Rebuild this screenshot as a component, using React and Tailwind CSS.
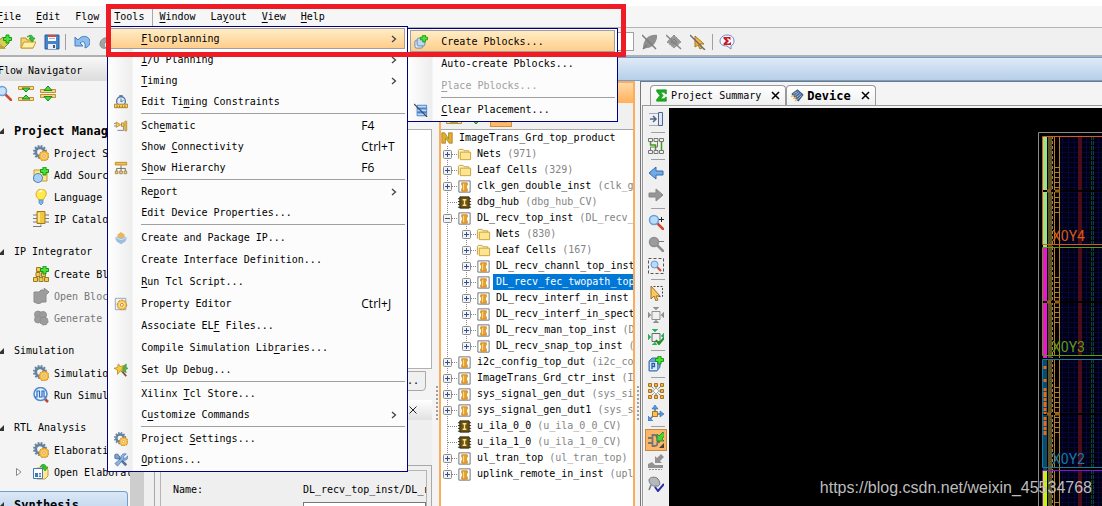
import { useState } from 'react';

const GearShape = ({ cx, cy, r, color, hole }) => (
  <g fill="none" stroke={color}>
    <circle cx={cx} cy={cy} r={r} strokeWidth="2" strokeDasharray={`${r * 0.3} ${r * 0.2236}`} />
    <circle cx={cx} cy={cy} r={r * 0.7} strokeWidth={r * 0.45} />
    <circle cx={cx} cy={cy} r={r * 0.35} fill={hole} stroke="none" />
  </g>
);

const Plus = ({ x, y }) => (
  <path
    d={`M${x + 2} ${y}h3v2.5h2.5v3h-2.5v2.5h-3v-2.5h-2.5v-3h2.5z`}
    fill="#4fe03c"
    stroke="#129a12"
    strokeWidth="1"
  />
);

const Lens = ({ color, handle }) => (
  <g>
    <path d="M9 9l6 6" stroke={handle} strokeWidth="2.5" strokeLinecap="round" />
    <circle cx="6" cy="6" r="4.5" fill={color} stroke={handle === '#8f8f8f' ? '#8f8f8f' : '#6c9dd6'} strokeWidth="1.5" />
  </g>
);

const icons = {
  newProject: (
    <g>
      <path d="M1 8l6-5 6 6-5 5z" fill="#dccb54" stroke="#8c8433" />
      <path d="M0 12h7l3 3H2z" fill="#b7a836" />
      <Plus x={8} y={1} />
    </g>
  ),
  open: (
    <g>
      <path d="M1 14V4h5l1 2h6v8z" fill="#f5d26a" stroke="#b98f2c" />
      <path d="M1 14l3-6h12l-3 6z" fill="#fff0a8" stroke="#c79c31" />
      <path d="M7 3c3-3 6-2 6 1h2l-3 4-3-4h2c0-1-2-2-4-1z" fill="#32c832" stroke="#148714" strokeWidth=".6" />
    </g>
  ),
  save: (
    <g>
      <path d="M1 1h14v14H1z" fill="#4384cc" stroke="#285b9c" />
      <path d="M4 1h8v6H4z" fill="#fff" />
      <path d="M4 1h8v2H4z" fill="#dc4a36" />
      <path d="M5 4.500h6" stroke="#9bb7d5" />
      <path d="M4 10h8v5H4z" fill="#e8eef6" />
      <path d="M9 11h2v3H9z" fill="#3d5b80" />
    </g>
  ),
  undo: (
    <path d="M1 3v9h8L6 9c3-3 6-1 5 5 3-1 5-3 5-6 0-6-8-8-12-2z" fill="#8fbdeb" stroke="#3e7fc4" />
  ),
  redo: <path d="M12 5C8 2 2 5 2 10c0 4 4 5 6 4-3-2-2-6 1-6l2 3 3-8z" fill="#a3a3a3" stroke="#888" />,
  leafOff: (
    <g>
      <path d="M1 15C1 5 7 0 15 1c1 5-4 13-10 13z" fill="#8f8f8f" />
      <path d="M0 1l14 14M1 15l4-4" stroke="#7c7c7c" strokeWidth="1.500" />
    </g>
  ),
  chipOff: (
    <g>
      <path d="M8 1l7 7-7 6-7-6z" fill="#999" stroke="#8c8c8c" strokeDasharray="2 1" />
      <path d="M8 5l3 3-3 2-3-2z" fill="none" stroke="#7c7c7c" />
      <path d="M0 1l15 14" stroke="#868686" strokeWidth="1.500" />
    </g>
  ),
  cursorOff: (
    <g>
      <path d="M5 2v11l3-2 2 4 2-1-2-4h4z" fill="#f2b63c" stroke="#a87520" />
      <path d="M0 1l15 15" stroke="#6b6b6b" strokeWidth="1.500" />
    </g>
  ),
  sigmaBubble: (
    <g>
      <path d="M8 1c5 0 7 3 7 6 0 2-1 4-3 5l0 3-4-3c-5 0-7-2-7-5s3-6 7-6z" fill="#f3f6ff" stroke="#6d8cc7" />
      <path d="M4.500 3h7v3l-2-1.500H7.500L10 7 7.500 9.500H10l2-1.500v3h-7.500V9.500L7 7 4.500 4.500z" fill="#d2141e" />
    </g>
  ),
  search: <Lens color="#c7e2fb" handle="#cc4a34" />,
  collapse: (
    <g>
      <path d="M.5 1.500h15v3H.5zM.5 12.500h15v3H.5z" fill="#f6d98a" stroke="#bf8e35" />
      <path d="M4 3h8L8 7z" fill="#52d246" stroke="#1b8c1b" />
      <path d="M4 14h8L8 10z" fill="#52d246" stroke="#1b8c1b" />
    </g>
  ),
  expand: (
    <g>
      <path d="M.5 4.500h15v3H.5zM.5 9.500h15v3H.5z" fill="#f6d98a" stroke="#bf8e35" />
      <path d="M4 5.500h8L8 1z" fill="#52d246" stroke="#1b8c1b" />
      <path d="M4 11.500h8L8 16z" fill="#52d246" stroke="#1b8c1b" />
    </g>
  ),
  gears: (
    <g>
      <GearShape cx={7} cy={7} r={6} color="#6583a0" hole="#f4f4f4" />
      <circle cx="11" cy="11" r="5" fill="#f4b63c" stroke="#b9781c" strokeWidth=".8" strokeDasharray="2 1" />
      <circle cx="11" cy="11" r="3" fill="#ffd36b" />
      <circle cx="11" cy="11" r="1.300" fill="#fff" stroke="#b9781c" strokeWidth=".6" />
    </g>
  ),
  addSource: (
    <g>
      <path d="M1 3h13v11H1z" fill="#ffe48c" stroke="#c79c31" />
      <circle cx="5" cy="11" r="4.500" fill="#a8cff5" stroke="#4d86c6" />
      <Plus x={8} y={0} />
    </g>
  ),
  bulb: (
    <g>
      <path d="M8 0c4 0 6 3 5 6-1 2-2 3-3 5H6C5 9 3 8 3 5.500 3 3 5 0 8 0z" fill="#ffea4e" stroke="#d8aa28" />
      <path d="M6 3c1-1 2-1 3-1" stroke="#fff" strokeWidth="1.500" />
      <path d="M6 11h4v3l-2 2-2-2z" fill="#7bb7ea" stroke="#4783bd" strokeWidth=".7" />
    </g>
  ),
  chip: (
    <g>
      <path d="M0 4h16M0 7.500h16M0 11h16" stroke="#777" />
      <path d="M4 .5h8v12H4z" fill="#f2c63f" stroke="#a57717" />
      <path d="M6 2v9" stroke="#fff2a8" strokeWidth="1.500" />
      <path d="M0 15.500h8v-2" fill="none" stroke="#777" />
    </g>
  ),
  blocks: (
    <g fill="#f0cd52" stroke="#9d7a1c">
      <path d="M.5 11.500h4v4h-4zM6 11.500h4v4H6zM11.500 11.500h4v4h-4zM3 6.500h4v4H3zM8.500 6.500h4v4h-4zM3.500 1.500h4v4h-4z" />
      <Plus x={8} y={0} />
    </g>
  ),
  blockOff: <path d="M1 4h5l2-2h4l-1-2 5 4-3 3v7H9l-3 2-5-2z" fill="#9c9c9c" stroke="#8b8b8b" />,
  generateOff: (
    <g fill="#9c9c9c" stroke="#929292">
      <circle cx="5" cy="4.500" r="3.500" />
      <circle cx="10" cy="5" r="3.500" />
      <circle cx="5" cy="9.500" r="3.500" />
      <circle cx="11" cy="11" r="4" stroke="#858585" strokeDasharray="2 1" />
    </g>
  ),
  runSim: (
    <g>
      <path d="M11 11l4 4" stroke="#c0472f" strokeWidth="2.500" />
      <circle cx="7.500" cy="7" r="6.500" fill="#e6f3ff" stroke="#4f8ace" strokeWidth="1.500" />
      <path d="M2 10h2V4h2.500v6H9V4h2v6h2" fill="none" stroke="#2b69bd" strokeWidth="1.200" />
    </g>
  ),
  openDesign: (
    <g>
      <path d="M4 14V4h10l1 2v6l-3 3H4z" fill="#ffe994" stroke="#c79c31" />
      <path d="M.5 4.500h9v10h-9z" fill="#fff" stroke="#4778b3" />
      <path d="M2 9h3v4H2zM6 9h2v1.500H6zM6 11.500h2V13H6z" fill="#3c77c3" />
      <path d="M7 3c2-4 6-3 6 0h2l-3 4-3-4h2c0-1-2-1-4 0z" fill="#32c832" stroke="#148714" strokeWidth=".6" />
    </g>
  ),
  timing: (
    <g>
      <path d="M6 1h4" stroke="#3b6594" strokeWidth="1.500" />
      <circle cx="8" cy="7" r="5" fill="#e2efff" stroke="#4c76a6" strokeWidth="1.500" />
      <path d="M8 4v4l3-2" stroke="#3b6594" fill="none" />
      <path d="M.5 10.500h15v4H.5z" fill="#ffd65a" stroke="#a77c1e" />
      <path d="M3.500 12v2M6.500 12v2M9.500 12v2M12.500 12v2" stroke="#6e5215" />
    </g>
  ),
  schematic: (
    <g fill="#f5cc5c" stroke="#b78a2c">
      <path d="M2.500 3.500l5 3-5 3z" />
      <path d="M8.500 4.500h3v4h-3z" />
      <path d="M12.500 2.500h2v11h-2z" />
      <path d="M0 5h2M0 8h2M8 7h1M4 13h7v-4" fill="none" stroke="#777" />
    </g>
  ),
  hierarchy: (
    <g>
      <path d="M1.500 1.500h13v3h-13z" fill="#f3c23c" stroke="#b98727" />
      <path d="M8 5v7M3 12V8.500h10V12" fill="none" stroke="#666" />
      <path d="M1.500 11.500h3v3h-3zM6.500 11.500h3v3h-3zM11.500 11.500h3v3h-3z" fill="#e8d3a0" stroke="#a4803a" />
    </g>
  ),
  packageIp: (
    <g>
      <path d="M1 7l7-2 7 2-2 5-5 3-5-3z" fill="#9dbce0" />
      <path d="M1 7l7 3 7-3" stroke="#d9e7f7" fill="none" />
      <path d="M4 4l4-3 4 3v3L8 8 4 7z" fill="#e8b95b" />
    </g>
  ),
  property: (
    <g>
      <path d="M1.500 1.500h12v13h-12z" fill="#f2f6fc" stroke="#8b9ebc" />
      <circle cx="9" cy="9" r="5.500" fill="#f6c24a" stroke="#b98224" strokeDasharray="3 1" />
      <circle cx="9" cy="9" r="3.500" fill="#ffdc85" />
      <circle cx="9" cy="9" r="1.700" fill="#fff" stroke="#b98224" />
    </g>
  ),
  debug: (
    <g>
      <path d="M7 7l7 8" stroke="#7a5230" strokeWidth="2" />
      <path d="M10 4l4-3v4l2 1-3 2 1 3-4-2z" fill="#52b44a" stroke="#2f7a2c" strokeWidth=".6" />
      <path d="M5 1l2 3 4-1-2 4 2 3-4-1-3 4V8L0 6l4-1z" fill="#f6cb3a" stroke="#a68119" strokeWidth=".8" />
    </g>
  ),
  options: (
    <g>
      <path d="M3 3l11 11" stroke="#54749c" strokeWidth="3" />
      <path d="M1 2l3-1 3 4-3 2-3-1z" fill="#7fa3cc" stroke="#4a6f9f" />
      <path d="M14 1l-3 3v2h2l3-3c1 4-3 6-6 5l-6 7-3-3 7-6c-1-3 2-6 6-5z" fill="#8db3e0" stroke="#3968a5" strokeWidth=".7" />
    </g>
  ),
  pblocks: (
    <g>
      <rect x="1" y="6" width="9" height="9" rx="2" fill="#d9e8f7" stroke="#5c83a8" />
      <rect x="3.500" y="3.500" width="9" height="9" rx="2" fill="#bfd8ee" stroke="#5c83a8" />
      <Plus x={8} y={0} />
    </g>
  ),
  clearPlacement: (
    <g>
      <rect x="3" y="2" width="12" height="13" rx="1" fill="#4b86cf" />
      <path d="M4 4h10M4 8.500h10M4 13h10" stroke="#c2dcf7" strokeWidth="2" />
      <path d="M0 1l15 15" stroke="#3f4954" strokeWidth="1.300" />
    </g>
  ),
  sigma: <path d="M2 1h12v5h-1l-2-2H7l3 4-3 4h4l2-2h1v5H2v-2l4-5-4-5z" fill="#17b01c" stroke="#0b8512" strokeWidth=".7" />,
  device: (
    <g>
      <path d="M1 6l7-5 7 6-6 8z" fill="#48699b" stroke="#2c4571" />
      <path d="M3 6l5-3M5 8l5-4M7 10l5-4M9 12l4-4" stroke="#b2c9e8" />
      <path d="M0 9l4-1M3 12l3-2M5 15l3-3" stroke="#dfb63a" strokeWidth="1.500" />
    </g>
  ),
  dock: (
    <g fill="none" stroke="#51658a">
      <path d="M1.500 2.500h9M1.500 14.500h9" strokeDasharray="1 1" />
      <path d="M2 8h6M5 5l3 3-3 3" strokeWidth="1.500" />
      <path d="M10.500 1.500h4v13h-4z" fill="#dbe8fa" />
    </g>
  ),
  netlist: (
    <g fill="none" stroke="#767676">
      <path d="M.5.5h4v3h-4zM6 .5h4v3H6zM11.500.5h4v3h-4zM.5 12.500h4v3h-4zM6 12.500h4v3H6zM11.500 12.500h4v3h-4z" />
      <path d="M2.500 4v3h5v5M13.500 4v8" stroke="#3f9d16" strokeWidth="1.500" />
      <path d="M9.500 4v5h-7v3" />
    </g>
  ),
  back: <path d="M1 8l7-6v4h7v4H8v4z" fill="#73aae6" stroke="#2d6cb4" />,
  forward: <path d="M15 8L8 2v4H1v4h7v4z" fill="#969696" stroke="#868686" />,
  zoomIn: (
    <g>
      <Lens color="#b9dbfa" handle="#cc4a34" />
      <path d="M11 5.500h5M13.500 3v5" stroke="#222" />
    </g>
  ),
  zoomOut: (
    <g>
      <Lens color="#9c9c9c" handle="#8f8f8f" />
      <path d="M11 5.500h5" stroke="#777" />
    </g>
  ),
  zoomFit: (
    <g>
      <path d="M.5.5h15v15H.5z" fill="none" stroke="#555" strokeDasharray="3 2" />
      <path d="M9 9l4 4" stroke="#cc4a34" strokeWidth="2" />
      <circle cx="6.500" cy="6.500" r="3.500" fill="#b9dbfa" stroke="#5f96d6" />
    </g>
  ),
  selectArea: (
    <g>
      <path d="M5.500 1.500h9v10H9" fill="none" stroke="#444" strokeDasharray="2 1.500" />
      <path d="M3 1v13l3-3 2 5 2-1-2-4h4z" fill="#fbc95c" stroke="#a1702a" />
    </g>
  ),
  fitOff: (
    <g fill="#8f8f8f" stroke="#8f8f8f">
      <path d="M4 4.500h8v8H4z" fill="none" />
      <path d="M0 5l3 3-3 3zM16 5l-3 3 3 3zM5 0l3 3 3-3zM5 16l3-3 3 3z" strokeWidth=".5" />
    </g>
  ),
  fitOn: (
    <g fill="#24b35a" stroke="#24b35a">
      <path d="M4 4.500h8v8H4z" fill="none" stroke="#666" />
      <path d="M0 5l3 3-3 3zM16 4l-3 3 3 2zM4 0l3 3 3-3zM4 16l3-3 2 3z" strokeWidth=".5" />
      <path d="M8 11l3 4 5-6" fill="none" stroke="#17921c" strokeWidth="2" />
    </g>
  ),
  drawPblock: (
    <g>
      <path d="M1 5l3-3h8v9l-3 4H1z" fill="#6da2df" stroke="#3d70ad" />
      <path d="M1.500 5.500h8v9h-8z" fill="#dcebfb" stroke="#5a8cc6" />
      <path d="M4 13V7.500h2.500v3H4" fill="none" stroke="#2a5aa2" strokeWidth="1.300" />
      <Plus x={8} y={0} />
    </g>
  ),
  spread: (
    <g>
      <path d="M2 2l12 12M14 2L2 14M8 1v14M1 8h14" stroke="#777" strokeDasharray="2 1" />
      <path
        d="M.5.5h3v3h-3zM6.500.5h3v3h-3zM12.500.5h3v3h-3zM.5 6.500h3v3h-3zM12.500 6.500h3v3h-3zM.5 12.500h3v3h-3zM6.500 12.500h3v3h-3zM12.500 12.500h3v3h-3z"
        fill="#f4b540"
        stroke="#a9731c"
      />
      <path d="M6.500 6.500h3v3h-3z" fill="#fff" />
    </g>
  ),
  move: (
    <g>
      <path d="M7 8V2M9 9h5M6 10l-4 4" stroke="#3f7cc4" strokeWidth="1.500" />
      <path d="M4 4l3-4 3 4zM12 6l4 3-4 3zM0 11v5h5z" fill="#5c98dd" stroke="#2d68b0" strokeWidth=".6" />
      <path d="M4.500 6.500h5v5h-5z" fill="#f7c350" stroke="#a9731c" />
    </g>
  ),
  route: (
    <g>
      <path d="M0 6h4M0 11h4M9 10h3M4.500 3v11h2c3 0 3-2 3-5.500S9 3 6.500 3z" fill="none" stroke="#757575" strokeWidth="1.800" />
      <path d="M15 0l-4 4-2-2v7h7l-2-2 3-4z" fill="#4bd13c" stroke="#11791a" strokeWidth=".7" />
      <path d="M16 11v5h-5z" fill="#444" />
    </g>
  ),
  routeOff: (
    <g fill="#929292">
      <path d="M13 0L9 4 7 2v7h7l-2-2 4-4z" />
      <path d="M0 10l4-2 3 3h8v3H0z" />
      <path d="M1 15.500h13" stroke="#929292" strokeDasharray="2 1" />
    </g>
  ),
  pinCheck: (
    <g>
      <path d="M1 4c0-3 7-4 9-1 3 4 2 8-2 7-3 1-7-2-7-6z" fill="#b4b8bd" stroke="#75797f" />
      <path d="M3 9l-2 5" stroke="#777" strokeWidth="1.500" />
      <path d="M7 11l3 4 6-7" fill="none" stroke="#2d2dab" strokeWidth="2" />
    </g>
  ),
  folder: (
    <g>
      <path d="M1.500 12.500v-9l1-1h4l1 1.500h5v2" fill="#fff3bd" stroke="#c5a03e" />
      <path d="M3.500 5.500h11v8h-11z" fill="#ffe58f" stroke="#c5a03e" />
    </g>
  ),
  cell: (
    <g>
      <path d="M2 2h12v12H2z" fill="#fff" stroke="#6e6e6e" />
      <path d="M5 4h6v2.500l-1 .5v3l1 .5V13H5v-2.500l1-.5V7l-1-.5z" fill="#eca326" stroke="#bd7714" strokeWidth=".7" />
      <path d="M7 5v7" stroke="#ffe08c" />
    </g>
  ),
  blackbox: (
    <g>
      <path d="M1 4h14M1 7h14M1 10h14M1 13h14" stroke="#222" />
      <path d="M3 2h10v12H3z" fill="#6b5217" stroke="#33270a" />
      <path d="M6 5h4M8 5v6M6 11h4" stroke="#ffe17e" strokeWidth="1.500" />
    </g>
  ),
  netlistRoot: (
    <path d="M1 15V1h4l5 8V1h5v14h-4L6 8v7z" fill="#e0ae2a" stroke="#8b6a14" strokeWidth=".8" />
  ),
};

const Icon = ({ name, className = 'size-4' }) => (
  <svg viewBox="0 0 16 16" className={`shrink-0 ${className}`} aria-hidden="true">
    {icons[name]}
  </svg>
);

// "&" marks the mnemonic letter
const Mnemonic = ({ text }) => {
  const at = text.indexOf('&');
  if (at < 0) return <span>{text}</span>;
  return (
    <span>
      {text.slice(0, at)}
      <u className="underline-offset-2">{text[at + 1]}</u>
      {text.slice(at + 2)}
    </span>
  );
};

const toolsMenu = [
  {
    rows: [
      { label: '&Floorplanning', sub: true },
      { label: '&I/O Planning', sub: true },
      { label: '&Timing', sub: true },
      { label: 'Edit Ti&ming Constraints', icon: 'timing' },
    ],
  },
  {
    rows: [
      { label: 'Sch&ematic', icon: 'schematic', keys: 'F4' },
      { label: 'Show &Connectivity', keys: 'Ctrl+T' },
      { label: 'S&how Hierarchy', icon: 'hierarchy', keys: 'F6' },
    ],
  },
  { rows: [{ label: 'Re&port', sub: true }, { label: 'Edit Device Properties...' }] },
  {
    tall: true,
    rows: [
      { label: 'Create and Package IP...', icon: 'packageIp' },
      { label: 'Create Interface Definition...' },
      { label: '&Run Tcl Script...' },
      { label: 'Property Editor', icon: 'property', keys: 'Ctrl+J' },
      { label: 'Associate EL&F Files...' },
      { label: 'Compile Simulation Lib&raries...' },
      { label: 'Set Up Debug...', icon: 'debug' },
    ],
  },
  { rows: [{ label: 'Xilinx &Tcl Store...' }, { label: 'C&ustomize Commands', sub: true }] },
  { rows: [{ label: 'Project &Settings...', icon: 'gears' }, { label: '&Options...', icon: 'options' }] },
];

const pblockMenu = [
  {
    tall: true,
    rows: [
      { label: 'Create Pblocks...', icon: 'pblocks' },
      { label: 'Auto-create Pblocks...' },
      { label: '&Place Pblocks...', disabled: true },
    ],
  },
  { rows: [{ label: '&Clear Placement...', icon: 'clearPlacement' }] },
];

const MenuRow = ({ row, tall, active }) => (
  <button
    disabled={row.disabled}
    className={`flex w-full items-center border pt-px text-left ${tall ? 'h-[22px]' : 'h-[21px]'} ${
      active ? 'border-[#9f9f9f] bg-linear-to-b from-[#ffedc4] to-[#ffcd8b]' : 'border-transparent'
    } ${row.disabled ? 'text-[#a0a0a0]' : 'text-black'}`}
  >
    <span className="flex w-[30px] shrink-0 pl-[3px]">
      {row.icon && <Icon name={row.icon} className="size-[14px]" />}
    </span>
    <Mnemonic text={row.label} />
    {row.keys && (
      <span className="ml-auto w-[43px] font-['Open_Sans','Noto_Sans',sans-serif] text-[12px]">{row.keys}</span>
    )}
    {row.sub && (
      <svg viewBox="0 0 6 8" className="mr-[7px] ml-auto h-2 w-[6px]">
        <path d="M1 1l3.500 3L1 7" fill="none" stroke="#444" strokeWidth="1.300" />
      </svg>
    )}
  </button>
);

const MenuPanel = ({ groups, activeLabel, label }) => (
  <div
    role="menu"
    aria-label={label}
    className="border border-[#000080] bg-linear-to-r from-white from-0% via-[#ededed] via-[24px] to-[#fcfcfc] to-[25px] px-[2px] py-px"
  >
    {groups.map((group, i) => (
      <div key={i}>
        {i > 0 && (
          <div className="flex h-[3px] items-center pl-[31px]">
            <div className="h-px w-full bg-[#a0a0a0]" />
          </div>
        )}
        {group.rows.map((row) => (
          <MenuRow key={row.label} row={row} tall={group.tall} active={row.label === activeLabel} />
        ))}
      </div>
    ))}
  </div>
);

const MenuBar = () => {
  const [openMenu, setOpenMenu] = useState('&Tools');
  return (
    <nav className="flex h-[22px] border-b border-[#b4b4b4] bg-[#f6f6f6]">
      <div className="-ml-[10px] flex">
        {['&File', '&Edit', 'Fl&ow', '&Tools', '&Window', 'La&yout', '&View', '&Help'].map((item) => (
          <div key={item} className="relative">
            <button
              onClick={() => setOpenMenu(openMenu === item ? '' : item)}
              className={`h-[21px] pr-[8px] pl-[7px] ${openMenu === item ? 'shadow-[1px_0_0_#a8a8a8]' : ''}`}
            >
              <Mnemonic text={item} />
            </button>
            {item === '&Tools' && openMenu === item && (
              <>
                <div className="absolute top-[20px] left-0 z-20 w-[301px]">
                  <MenuPanel groups={toolsMenu} activeLabel="&Floorplanning" label="Tools" />
                  <div className="absolute top-[2px] left-[300px] w-[211px]">
                    <MenuPanel groups={pblockMenu} activeLabel="Create Pblocks..." label="Floorplanning" />
                  </div>
                </div>
                <div className="pointer-events-none absolute -top-[2px] -left-px z-30 h-[53px] w-[520px] border-5 border-[#ee1c24]" />
              </>
            )}
          </div>
        ))}
      </div>
    </nav>
  );
};

const ToolButton = ({ name, label }) => (
  <button aria-label={label} className="flex w-6 shrink-0 justify-center">
    <Icon name={name} />
  </button>
);

const MainToolbar = () => (
  <div className="flex h-[29px] items-center border-b-2 border-[#b0b0b0] bg-[#f0f0f0]">
    <div className="-ml-[8px] flex w-[642px] shrink-0 items-center">
      <ToolButton name="newProject" label="New Project" />
      <ToolButton name="open" label="Open" />
      <ToolButton name="save" label="Save" />
      <span className="mr-[4px] ml-[1px] h-4 w-px bg-[#a0a0a0]" />
      <ToolButton name="undo" label="Undo" />
      <ToolButton name="redo" label="Redo" />
      <select aria-label="Window layout" className="ml-auto h-[19px] w-[140px] appearance-none border border-[#a0a0a0] bg-white">
        <option></option>
      </select>
    </div>
    <div className="ml-1 flex items-center">
      <ToolButton name="leafOff" label="Unhighlight" />
      <ToolButton name="chipOff" label="Unmark" />
      <ToolButton name="cursorOff" label="Unselect" />
      <span className="mx-[2px] h-4 w-px bg-[#a0a0a0]" />
      <ToolButton name="sigmaBubble" label="Messages" />
    </div>
  </div>
);

const flowSections = [
  {
    title: 'Project Manager',
    bold: true,
    items: [
      { label: 'Project Settings', icon: 'gears' },
      { label: 'Add Sources', icon: 'addSource' },
      { label: 'Language Templates', icon: 'bulb' },
      { label: 'IP Catalog', icon: 'chip' },
    ],
  },
  {
    title: 'IP Integrator',
    items: [
      { label: 'Create Block Design', icon: 'blocks' },
      { label: 'Open Block Design', icon: 'blockOff', disabled: true },
      { label: 'Generate Block Design', icon: 'generateOff', disabled: true },
    ],
  },
  {
    title: 'Simulation',
    items: [
      { label: 'Simulation Settings', icon: 'gears' },
      { label: 'Run Simulation', icon: 'runSim' },
    ],
  },
  {
    title: 'RTL Analysis',
    items: [
      { label: 'Elaboration Settings', icon: 'gears' },
      { label: 'Open Elaborated Design', icon: 'openDesign', closed: true },
    ],
  },
];

const OpenArrow = () => (
  <svg viewBox="0 0 6 6" className="-ml-[2px] size-[6px] shrink-0">
    <path d="M6 0v6H0z" fill="#333" />
  </svg>
);

const FlowNavigator = () => (
  <aside className="flex w-[144px] shrink-0 overflow-hidden bg-[#f4f4f4]">
    <div className="w-[130px] shrink-0 overflow-hidden">
      <h2 className="flex h-6 items-center bg-linear-to-b from-[#f8f8f8] to-[#dcdcdc] pt-[3px] whitespace-nowrap">
        <span className="-ml-[2px]">Flow Navigator</span>
      </h2>
      <div className="-ml-[4px] flex h-6 items-center gap-[6px]">
        <button aria-label="Search"><Icon name="search" /></button>
        <button aria-label="Collapse all"><Icon name="collapse" /></button>
        <button aria-label="Expand all"><Icon name="expand" /></button>
      </div>
      <div className="flex flex-col gap-[11px] pt-[15px]">
        {flowSections.map((section) => (
          <section key={section.title}>
            <h3
              className={`flex h-[22px] items-center gap-[10px] whitespace-nowrap ${
                section.bold ? 'text-[12px] font-bold' : ''
              }`}
            >
              <OpenArrow />
              {section.title}
            </h3>
            {section.items.map((item) => (
              <button
                key={item.label}
                className={`flex h-[22px] w-full items-center whitespace-nowrap ${item.disabled ? 'text-[#777]' : ''}`}
              >
                <span className="flex w-[33px] shrink-0 justify-center">
                  {item.closed && (
                    <svg viewBox="0 0 6 8" className="ml-[5px] h-2 w-[6px]">
                      <path d="M.5.5L5 4 .5 7.500z" fill="#fff" stroke="#888" />
                    </svg>
                  )}
                </span>
                <Icon name={item.icon} />
                <span className="ml-[5px] pt-px">{item.label}</span>
              </button>
            ))}
          </section>
        ))}
      </div>
      <h3 className="mt-[8px] mr-[2px] flex h-7 items-center gap-[10px] rounded-tr-sm border border-l-0 border-[#6f9fd0] bg-linear-to-b from-[#dbe8f6] to-[#b8d0ea] text-[12px] font-bold">
        <OpenArrow />
        Synthesis
      </h3>
    </div>
    <div className="flex-1 bg-[#cdcdcd]" />
  </aside>
);

const PropertiesColumn = () => (
  <section className="flex w-[290px] shrink-0 flex-col overflow-hidden bg-[#f4f4f4] pt-12 pr-[2px]">
    <div className="h-[240px] shrink-0 border border-[#b0b0b0] bg-white" />
    <div className="mt-[2px] mr-[6px] flex h-5 shrink-0 items-center justify-end rounded-b border border-[#a8a8a8] bg-[#f0f0f0] pr-[6px]">
      ...
    </div>
    <div className="mt-[9px] flex h-5 shrink-0 items-center justify-end bg-linear-to-b from-white to-[#e2e2e2] pr-[15px]">
      <button aria-label="Close">
        <svg viewBox="0 0 8 8" className="size-2">
          <path d="M.5.5l7 7M7.500.5l-7 7" stroke="#222" />
        </svg>
      </button>
    </div>
    <div className="shrink-0 bg-[#efefef] pt-[45px]">
      <div className="ml-[10px] border border-b-0 border-[#a8a8a8] pt-1 pr-1 pl-[5px]">
        <div className="flex border border-b-0 border-[#b4b4b4] pt-2 pl-[12px]">
          <label htmlFor="cell-name" className="w-[130px] shrink-0 pt-[3px]">Name:</label>
          <div className="min-w-0 overflow-hidden">
            <div className="h-[23px] pt-[3px]">DL_recv_top_inst/DL_recv_fec</div>
            <input id="cell-name" className="h-5 w-full border border-[#777] bg-white" />
          </div>
        </div>
      </div>
    </div>
  </section>
);

const Splitter = () => (
  <div className="flex w-[5px] shrink-0 flex-col items-center gap-[2px] bg-[#f4f4f4] pt-[305px]">
    {Array.from({ length: 9 }, (_, i) => (
      <span key={i} className="size-[2px] bg-[#a0a0a0]" />
    ))}
  </div>
);

const netlist = [
  { name: 'Nets', note: '(971)', icon: 'folder' },
  { name: 'Leaf Cells', note: '(329)', icon: 'folder' },
  { name: 'clk_gen_double_inst', note: '(clk_gen_double)', icon: 'cell' },
  { name: 'dbg_hub', note: '(dbg_hub_CV)', icon: 'blackbox', leaf: true },
  { name: 'DL_recv_top_inst', note: '(DL_recv_top)', icon: 'cell', open: true },
  { name: 'Nets', note: '(830)', icon: 'folder', depth: 1 },
  { name: 'Leaf Cells', note: '(167)', icon: 'folder', depth: 1 },
  { name: 'DL_recv_channl_top_inst', note: '', icon: 'cell', depth: 1 },
  { name: 'DL_recv_fec_twopath_top_inst', note: '', icon: 'cell', depth: 1, selected: true },
  { name: 'DL_recv_interf_in_inst', note: '', icon: 'cell', depth: 1 },
  { name: 'DL_recv_interf_in_spect', note: '', icon: 'cell', depth: 1 },
  { name: 'DL_recv_man_top_inst', note: '(DL_recv_man)', icon: 'cell', depth: 1 },
  { name: 'DL_recv_snap_top_inst', note: '(DL_recv)', icon: 'cell', depth: 1, end: true },
  { name: 'i2c_config_top_dut', note: '(i2c_config)', icon: 'cell' },
  { name: 'ImageTrans_Grd_ctr_inst', note: '(Image)', icon: 'cell' },
  { name: 'sys_signal_gen_dut', note: '(sys_signal)', icon: 'cell' },
  { name: 'sys_signal_gen_dut1', note: '(sys_signal)', icon: 'cell' },
  { name: 'u_ila_0_0', note: '(u_ila_0_0_CV)', icon: 'blackbox', leaf: true },
  { name: 'u_ila_1_0', note: '(u_ila_1_0_CV)', icon: 'blackbox', leaf: true },
  { name: 'ul_tran_top', note: '(ul_tran_top)', icon: 'cell' },
  { name: 'uplink_remote_in_inst', note: '(uplink)', icon: 'cell', end: true },
];

const Branch = ({ node }) => (
  <svg viewBox="0 0 16 16" className="size-4 shrink-0">
    <path d={node.end ? 'M6.500 0v8' : 'M6.500 0v16'} stroke="#888" strokeDasharray="1 1" />
    <path d="M7 8.500h9" stroke="#888" strokeDasharray="1 1" />
    {!node.leaf && (
      <g>
        <rect x="2.500" y="4.500" width="8" height="8" rx="1" fill="#f3f3f3" stroke="#8c8c8c" />
        <path d={node.open ? 'M4 8.500h5' : 'M4 8.500h5M6.500 6v5'} stroke="#2b4fa0" />
      </g>
    )}
  </svg>
);

const NetlistPanel = () => (
  <section className="flex w-[196px] shrink-0 flex-col overflow-hidden border-2 border-b-0 border-[#faae5c] bg-white">
    <div className="h-5 shrink-0 bg-linear-to-b from-[#ffd9a4] to-[#ffb058]" />
    <div className="flex h-[27px] shrink-0 items-center gap-[6px] border-b border-[#a8a8a8] bg-[#f0f0f0] pl-[5px]">
      <button aria-label="Collapse all"><Icon name="collapse" /></button>
      <button aria-label="Expand all"><Icon name="expand" /></button>
      <button aria-label="Link selection" className="flex h-[22px] w-[22px] items-center justify-center border border-[#d48f3d] bg-[#ffb866]">
        <Icon name="dock" className="size-[14px]" />
      </button>
    </div>
    <ul className="whitespace-nowrap">
      <li className="flex h-4 items-center gap-[6px]">
        <Icon name="netlistRoot" className="size-[12px]" />
        ImageTrans_Grd_top_product
      </li>
      {netlist.map((node, i) => (
        <li key={i} className="flex h-4 items-center">
          {node.depth && (
            <svg viewBox="0 0 19 16" className="h-4 w-[19px] shrink-0">
              <path d="M6.500 0v16" stroke="#888" strokeDasharray="1 1" />
            </svg>
          )}
          <Branch node={node} />
          <Icon name={node.icon} className="size-[15px]" />
          <span
            className={`ml-[2px] h-4 px-[3px] leading-4 ${
              node.selected ? 'flex-1 bg-[#0078d7] text-white' : ''
            }`}
          >
            {node.name} <span className="text-[#848484]">{node.note}</span>
          </span>
        </li>
      ))}
    </ul>
  </section>
);

const deviceTools = [
  ['dock'],
  ['netlist'],
  ['back', 'forward'],
  ['zoomIn', 'zoomOut', 'zoomFit'],
  ['selectArea', 'fitOff', 'fitOn'],
  ['drawPblock'],
  ['spread', 'move'],
  ['route', 'routeOff', 'pinCheck'],
];

const DeviceTools = () => (
  <div className="w-6 shrink-0 bg-[#f0f0f0]">
    {deviceTools.map((group, i) => (
      <div key={i}>
        {i > 0 && (
          <div className="flex h-[5px] items-center pl-[6px]">
            <div className="h-px w-[14px] bg-[#a0a0a0]" />
          </div>
        )}
        {group.map((name) => (
          <button
            key={name}
            aria-label={name}
            className={`flex h-[22px] w-[22px] items-center justify-center border ${
              name === 'route' ? 'border-[#c08a48] bg-[#fdb568]' : 'border-transparent'
            }`}
          >
            <Icon name={name} />
          </button>
        ))}
      </div>
    ))}
  </div>
);

const regions = [
  { top: 4, height: 108, color: '#d85a18', strip: '#98e48c', label: 'X0Y4' },
  { top: 115, height: 108, color: '#5f9a14', strip: '#ee14d4', label: 'X0Y3' },
  { top: 227, height: 108, color: '#157aa6', strip: '#0d4a68', label: 'X0Y2' },
  { top: 338, height: 108, color: '#8a10d8', strip: '#c4f50c', label: '' },
];

const DeviceMap = () => (
  <svg width="64" height="374" viewBox="0 0 64 374" className="shrink-0">
    <defs>
      <pattern id="tiles" width="6" height="5" patternUnits="userSpaceOnUse">
        <rect width="6" height="5" fill="#000010" />
        <path d="M0 .5h6M.5 0v5" stroke="#06063e" />
      </pattern>
      <pattern id="ticks" width="6" height="5" patternUnits="userSpaceOnUse">
        <path d="M0 .5h6" stroke="#b5802a" />
      </pattern>
    </defs>
    <path d="M.5 374V.5H64" fill="none" stroke="#8a8a8a" />
    {regions.map((r) => (
      <g key={r.top}>
        <rect x="22" y={r.top + 1} width="42" height={r.height} fill="url(#tiles)" />
        <rect x="5" y={r.top} width="4" height={r.height + 3} fill={r.strip} />
        <rect x="10" y={r.top} width="4" height={r.height + 3} fill="#5e5428" />
        <path d={`M14.500 ${r.top}v${r.height + 3}`} stroke="#b5802a" strokeDasharray="3 2" />
        <path d={`M16.500 ${r.top + 1}v${r.height}M21.500 ${r.top}v${r.height + 3}`} stroke="#b5802a" />
        <rect x="17" y={r.top + 28} width="5" height="26" fill="url(#ticks)" />
        <rect x="17" y={r.top + 58} width="5" height="20" fill="url(#ticks)" />
        <rect x="40" y={r.top} width="4" height={r.height} fill="#4c0c18" />
        <path d={`M53.500 ${r.top}v${r.height}M55.500 ${r.top}v${r.height}`} stroke="#0a4a14" strokeDasharray="4 1" />
        <path d={`M5 ${r.top + 55}H64`} stroke="#000" strokeWidth="2" />
        <path d={`M9 ${r.top + 55}h4M17 ${r.top + 55}h5`} stroke="#9a5e18" strokeWidth="3" />
        <path d={`M64 ${r.top + 0.5}H4.500v${r.height}H64`} fill="none" stroke={r.color} />
        <text
          x="14"
          y={r.top + 105}
          fill={r.color}
          fontSize="14"
          fontFamily="Roboto, 'Liberation Sans', sans-serif"
        >
          {r.label}
        </text>
      </g>
    ))}
    <path d="M7 234v3M7 247v4M7 256v26M7 285v18" stroke="#ea6a1c" strokeWidth="3" strokeDasharray="3 1 5 1" />
  </svg>
);

const Tab = ({ icon, title, active }) => (
  <div
    role="tab"
    aria-selected={active}
    className={`flex h-5 items-center rounded-t border border-b-0 border-[#9a9a9a] bg-linear-to-b from-white to-[#f0f0f0] pr-[5px] pl-[4px] ${
      active ? 'text-[12px] font-bold' : ''
    }`}
  >
    <Icon name={icon} className="size-[13px]" />
    <span className="mr-[10px] ml-[3px]">{title}</span>
    <button aria-label={`Close ${title}`}>
      <svg viewBox="0 0 9 9" className="size-[9px]">
        <path d="M1 1l7 7M8 1L1 8" stroke="#000" strokeWidth="1.500" />
      </svg>
    </button>
  </div>
);

const DevicePanel = () => (
  <section className="flex min-w-0 flex-1 flex-col border-t border-l border-[#777] bg-[#f4f4f4] pt-[3px]">
    <div className="flex shrink-0 pl-[9px]" role="tablist">
      <Tab icon="sigma" title="Project Summary" />
      <Tab icon="device" title="Device" active />
    </div>
    <div className="ml-px flex min-h-0 flex-1 border-t border-l border-[#9a9a9a] pt-[2px] pl-[2px]">
      <DeviceTools />
      <div className="relative flex min-w-0 flex-1 justify-end overflow-hidden bg-black pt-[24px]">
        <DeviceMap />
        <p className="absolute right-[10px] bottom-[10px] font-['Liberation_Sans',sans-serif] text-[16px] text-[#bdbdbd]">
          https://blog.csdn.net/weixin_45534768
        </p>
      </div>
    </div>
  </section>
);

export default function App() {
  return (
    <div className="flex h-screen flex-col overflow-hidden bg-white pt-[6px] font-['DejaVu_Sans_Mono','Liberation_Mono',monospace] text-[10px] leading-4 text-black">
      <MenuBar />
      <MainToolbar />
      <div className="flex min-h-0 flex-1">
        <FlowNavigator />
        <main className="flex min-w-0 flex-1 flex-col">
          <div className="h-6 shrink-0 border-y border-[#6f9fd0] bg-linear-to-b from-[#dfeaf7] to-[#b6cfe9]" />
          <div className="flex min-h-0 flex-1">
            <PropertiesColumn />
            <Splitter />
            <NetlistPanel />
            <Splitter />
            <DevicePanel />
          </div>
        </main>
      </div>
    </div>
  );
}
